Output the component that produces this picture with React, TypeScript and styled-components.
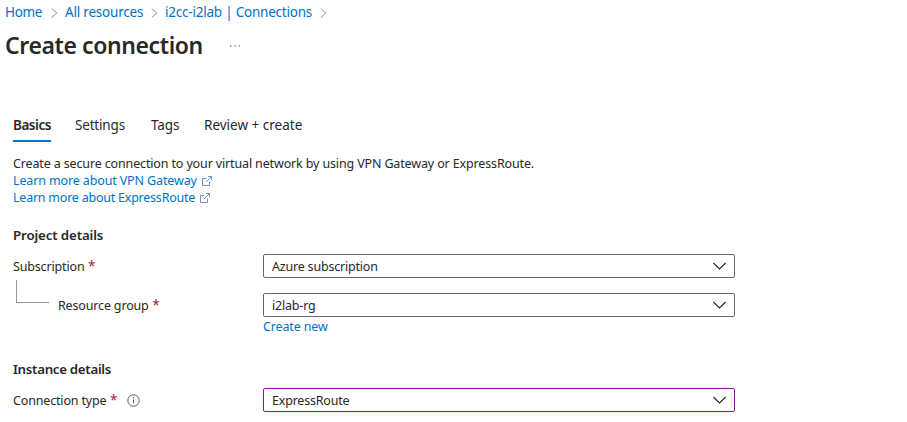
import React from 'react';
import styled, { createGlobalStyle } from 'styled-components';

const GlobalStyle = createGlobalStyle`
  * { box-sizing: border-box; }
  body { margin: 0; background: #fff; }
`;

const Page = styled.main`
  width: 907px;
  height: 422px;
  overflow: hidden;
  background: #fff;
  color: #292827;
  font-family: "Noto Sans", sans-serif;
  font-size: 12.5px;
  line-height: 17px;
  letter-spacing: -0.14px;
  white-space: nowrap;
`;

const Link = styled.a<{ $spacing?: number }>`
  color: #0072c9;
  text-decoration: none;
  letter-spacing: ${({ $spacing }) => $spacing ?? -0.13}px;
`;

const Breadcrumb = styled.nav`
  display: grid;
  grid-template-columns: 60px 100px 169px;
  height: 25px;
  padding-left: 5px;
  align-items: center;
  font-size: 13.5px;
`;

const Crumb = styled.span`
  display: flex;
  align-items: center;
  justify-content: space-between;
  padding-right: 7px;
`;

const TitleBar = styled.header`
  display: flex;
  align-items: center;
  height: 42px;
  padding-left: 5px;
`;

const Title = styled.h1`
  width: 225px;
  margin: 0;
  padding-bottom: 2px;
  font-size: 23px;
  font-weight: 600;
  line-height: 40px;
  letter-spacing: -0.4px;
`;

const Content = styled.section`
  padding: 41px 0 0 13px;
`;

const Tabs = styled.div`
  display: flex;
  height: 34px;
`;

const Tab = styled.div<{ $width: number; $gap: number; $active?: boolean; $spacing: number }>`
  width: ${({ $width }) => $width}px;
  margin-right: ${({ $gap }) => $gap}px;
  border-bottom: 2px solid ${({ $active }) => ($active ? '#0072d0' : 'transparent')};
  font-size: 13.5px;
  font-weight: ${({ $active }) => ($active ? 600 : 400)};
  line-height: 34px;
  letter-spacing: ${({ $spacing }) => $spacing}px;
`;

const Intro = styled.div`
  display: flex;
  flex-direction: column;
  margin-top: 13px;
`;

const IntroLine = styled.div`
  display: flex;
  align-items: center;
  gap: 5px;
  height: 17px;
`;

const SectionTitle = styled.h2<{ $top: number }>`
  margin: ${({ $top }) => $top}px 0 0;
  font-size: 13.3px;
  font-weight: 600;
  line-height: 20px;
  letter-spacing: ${({ $top }) => ($top > 22 ? -0.3 : -0.14)}px;
`;

const Field = styled.div<{ $top: number }>`
  display: grid;
  grid-template-columns: 250px 472px;
  align-items: center;
  height: 24px;
  margin-top: ${({ $top }) => $top}px;
`;

const Label = styled.label<{ $nested?: boolean }>`
  display: flex;
  align-items: center;
  padding-left: ${({ $nested }) => ($nested ? 3 : 0)}px;
  letter-spacing: -0.16px;
`;

const Required = styled.span`
  margin-left: 3.5px;
  color: #a4262c;
  font-size: 13.5px;
`;

const Branch = styled.span`
  align-self: flex-start;
  width: 33px;
  height: 23px;
  margin: -17px 9px 0 0;
  border: solid #979593;
  border-width: 0 0 1px 1px;
`;

const Select = styled.div<{ $edited?: boolean }>`
  display: flex;
  align-items: center;
  justify-content: space-between;
  height: 24px;
  padding: 0 8px;
  border: 1px solid ${({ $edited }) => ($edited ? '#881798' : '#6b6967')};
  border-radius: 2px;
  letter-spacing: -0.2px;
`;

const CreateNew = styled.div`
  padding: 1px 0 0 250px;
  height: 18px;
`;

const Info = styled.svg`
  margin-left: 10px;
`;

const Separator = () => (
  <svg width="7" height="10" viewBox="0 0 7 10" fill="none" stroke="#85827f" strokeWidth="0.9">
    <path d="M.7.5 5.8 5 .7 9.5" />
  </svg>
);

const Chevron = () => (
  <svg width="13" height="8" viewBox="0 0 13 8" fill="none" stroke="#252423" strokeWidth="1.1">
    <path d="m.4 1 6.1 6 6.1-6" />
  </svg>
);

const External = () => (
  <svg width="10" height="10" viewBox="0 0 10 10" fill="none" stroke="#477bc5" strokeWidth="0.8">
    <path d="M4.5 2.5h-4v7h7v-4M6 .5h3.5V4M9.5.5 4 6" />
  </svg>
);

export default function App() {
  return (
    <>
      <GlobalStyle />
      <Page>
        <Breadcrumb>
          <Crumb><Link $spacing={-0.35}>Home</Link><Separator /></Crumb>
          <Crumb><Link $spacing={-0.2}>All resources</Link><Separator /></Crumb>
          <Crumb><Link $spacing={-0.22}>i2cc-i2lab | Connections</Link><Separator /></Crumb>
        </Breadcrumb>
        <TitleBar>
          <Title>Create connection</Title>
          <svg width="11" height="2" viewBox="0 0 11 2" fill="#777">
            <rect x="0" y=".3" width="1.3" height="1.3" />
            <rect x="4.4" y=".3" width="1.3" height="1.3" />
            <rect x="8.8" y=".3" width="1.3" height="1.3" />
          </svg>
        </TitleBar>
        <Content>
          <Tabs>
            <Tab $width={38} $gap={24} $active $spacing={-0.46}>Basics</Tab>
            <Tab $width={50} $gap={26} $spacing={-0.18}>Settings</Tab>
            <Tab $width={29} $gap={24} $spacing={-0.1}>Tags</Tab>
            <Tab $width={99} $gap={0} $spacing={0}>Review + create</Tab>
          </Tabs>
          <Intro>
            <IntroLine>Create a secure connection to your virtual network by using VPN Gateway or ExpressRoute.</IntroLine>
            <IntroLine><Link>Learn more about VPN Gateway</Link><External /></IntroLine>
            <IntroLine><Link $spacing={-0.23}>Learn more about ExpressRoute</Link><External /></IntroLine>
          </Intro>
          <SectionTitle $top={19}>Project details</SectionTitle>
          <Field $top={9}>
            <Label>Subscription<Required>*</Required></Label>
            <Select>Azure subscription<Chevron /></Select>
          </Field>
          <Field $top={15}>
            <Label $nested><Branch />Resource group<Required>*</Required></Label>
            <Select>i2lab-rg<Chevron /></Select>
          </Field>
          <CreateNew><Link>Create new</Link></CreateNew>
          <SectionTitle $top={24}>Instance details</SectionTitle>
          <Field $top={9}>
            <Label>
              Connection type<Required>*</Required>
              <Info width="13" height="13" viewBox="0 0 13 13" fill="none" stroke="#605e5c" strokeWidth="1">
                <circle cx="6.5" cy="6.5" r="5.7" />
                <path d="M6.5 5.4v4M6.5 3.3v1.1" />
              </Info>
            </Label>
            <Select $edited>ExpressRoute<Chevron /></Select>
          </Field>
        </Content>
      </Page>
    </>
  );
}
